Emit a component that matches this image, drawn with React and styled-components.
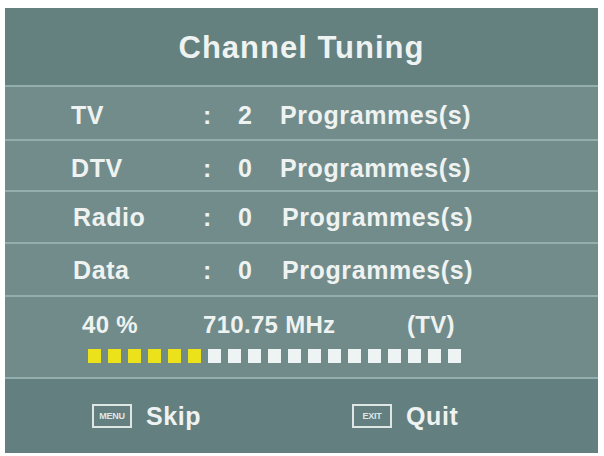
import React from "react";
import styled, { createGlobalStyle } from "styled-components";

const Global = createGlobalStyle`
  html, body {
    margin: 0;
    padding: 0;
    background: #ffffff;
  }
  body {
    font-family: "Liberation Sans", Arial, sans-serif;
  }
`;

const Page = styled.div`
  width: 604px;
  height: 456px;
  padding: 8px 0 0 5px;
  box-sizing: border-box;
`;

const Panel = styled.div`
  width: 593px;
  height: 445px;
  background: #718b8b;
  display: flex;
  flex-direction: column;
  color: #eef3f1;
  font-weight: bold;
`;

const Header = styled.div`
  height: 79px;
  box-sizing: border-box;
  padding-top: 3px;
  background: #64807f;
  display: flex;
  align-items: center;
  justify-content: center;
  font-size: 31px;
  letter-spacing: 1px;
  border-bottom: 2px solid #93aeac;
`;

const Row = styled.div`
  height: ${(p) => p.h}px;
  box-sizing: border-box;
  padding-top: ${(p) => p.top}px;
  display: grid;
  grid-template-columns: 132px 35px 42px 1fr;
  align-items: center;
  padding-left: 66px;
  font-size: 25px;
  letter-spacing: 0.6px;
  border-bottom: 2px solid #93aeac;
  background: #728c8c;
`;

const Cell = styled.span`
  padding-left: ${(p) => p.shift || 0}px;
`;

const Progress = styled.div`
  height: 80px;
  display: flex;
  flex-direction: column;
  justify-content: center;
  gap: 10px;
  padding-left: 77px;
  border-bottom: 2px solid #93aeac;
  background: #718b8b;
`;

const InfoLine = styled.div`
  display: grid;
  grid-template-columns: 121px 204px auto;
  font-size: 24px;
  letter-spacing: 0.3px;
`;

const Bar = styled.div`
  display: flex;
  gap: 7px;
  margin-left: 6px;
`;

const Block = styled.span`
  width: 13px;
  height: 14px;
  background: ${(p) => (p.on ? "#ece21c" : "#eef3f3")};
`;

const Footer = styled.div`
  flex: 1;
  background: #647f7f;
  display: grid;
  grid-template-columns: 260px auto;
  align-items: center;
  padding-left: 87px;
`;

const Action = styled.div`
  display: flex;
  align-items: center;
  gap: 14px;
  font-size: 25px;
  letter-spacing: 0.6px;
`;

const KeyIcon = styled.span`
  width: 36px;
  height: 20px;
  border: 2px solid #dfe7e6;
  display: flex;
  align-items: center;
  justify-content: center;
  font-size: 9px;
  letter-spacing: -0.3px;
  color: #dfe7e6;
`;

const rows = [
  { label: "TV", count: 2, h: 54, top: 5, shift: 0 },
  { label: "DTV", count: 0, h: 51, top: 5, shift: 0 },
  { label: "Radio", count: 0, h: 52, top: 1, shift: 2 },
  { label: "Data", count: 0, h: 53, top: 1, shift: 2 },
];

const total = 19;
const lit = 6;

export default function App() {
  return (
    <Page>
      <Global />
      <Panel>
        <Header>Channel Tuning</Header>
        {rows.map((r) => (
          <Row key={r.label} h={r.h} top={r.top}>
            <Cell shift={r.shift}>{r.label}</Cell>
            <Cell>:</Cell>
            <Cell>{r.count}</Cell>
            <Cell shift={r.shift}>Programmes(s)</Cell>
          </Row>
        ))}
        <Progress>
          <InfoLine>
            <span>40 %</span>
            <span>710.75 MHz</span>
            <span>(TV)</span>
          </InfoLine>
          <Bar>
            {Array.from({ length: total }).map((_, i) => (
              <Block key={i} on={i < lit} />
            ))}
          </Bar>
        </Progress>
        <Footer>
          <Action>
            <KeyIcon>MENU</KeyIcon>
            Skip
          </Action>
          <Action>
            <KeyIcon>EXIT</KeyIcon>
            Quit
          </Action>
        </Footer>
      </Panel>
    </Page>
  );
}
